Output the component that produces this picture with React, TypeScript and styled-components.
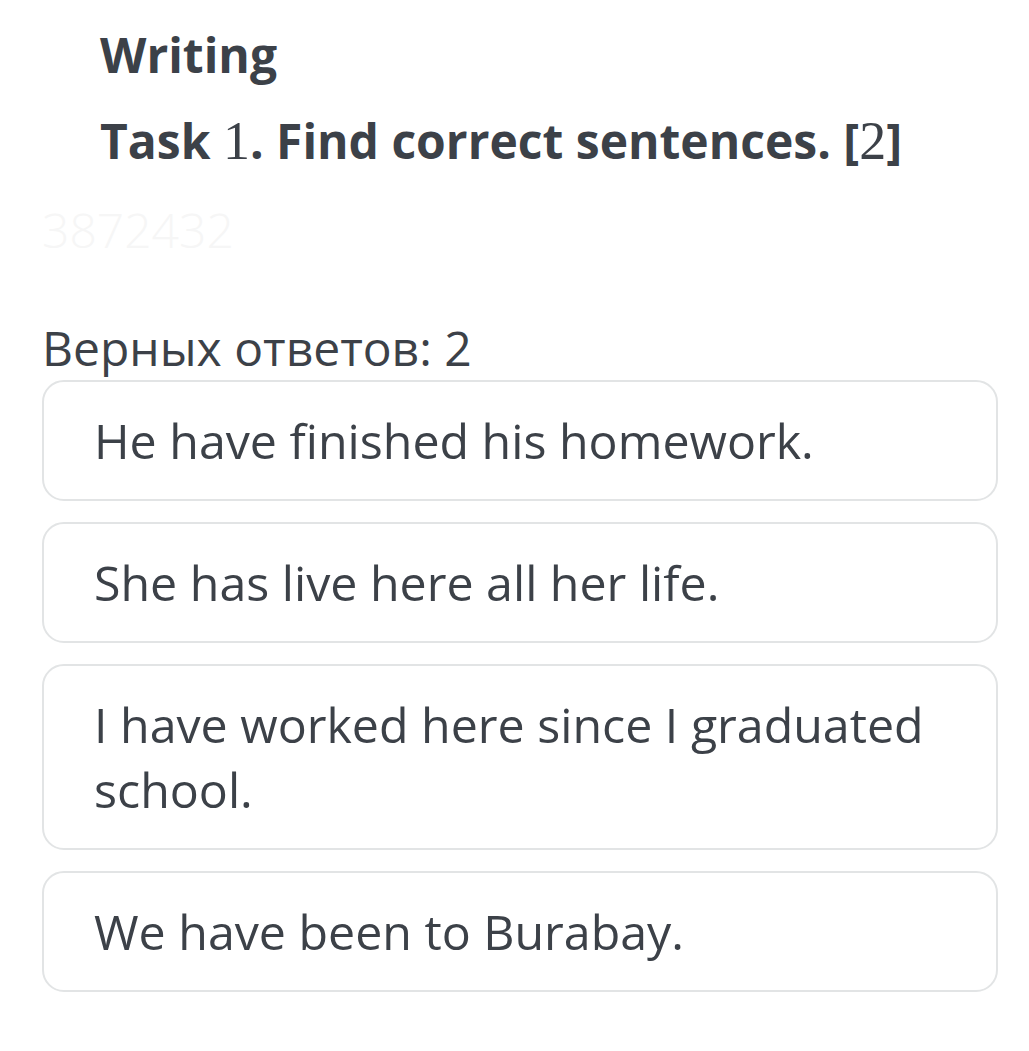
import React from 'react';
import styled, { createGlobalStyle } from 'styled-components';

const GlobalStyle = createGlobalStyle`
  html, body {
    margin: 0;
    padding: 0;
    background: #ffffff;
  }
  body {
    font-family: "Open Sans", "Liberation Sans", sans-serif;
    color: #3c4148;
  }
`;

const Page = styled.div`
  width: 1029px;
  min-height: 1051px;
  box-sizing: border-box;
  padding: 22px 31px 0 42px;
`;

const Heading = styled.div`
  padding-left: 58px;
`;

const SectionTitle = styled.h1`
  margin: 0;
  font-size: 48px;
  font-weight: 700;
  line-height: 66px;
`;

const TaskTitle = styled.h2`
  margin: 20px 0 0;
  font-size: 48px;
  font-weight: 700;
  line-height: 66px;
`;

const SerifDigit = styled.span`
  font-family: "Liberation Serif", serif;
  font-size: 54px;
  font-weight: 400;
`;

const Watermark = styled.div`
  margin-top: 26px;
  font-size: 48px;
  font-weight: 300;
  line-height: 60px;
  color: #f6f6f6;
`;

const Hint = styled.div`
  margin-top: 58px;
  font-size: 48px;
  line-height: 60px;
`;

const Options = styled.div`
  display: flex;
  flex-direction: column;
  gap: 21px;
  margin-top: 2px;
`;

const Option = styled.div`
  border: 2px solid #e2e4e5;
  border-radius: 22px;
  padding: 26px 40px 26px 50px;
  font-size: 48.3px;
  line-height: 65px;
  background: #fff;
`;

const options = [
  'He have finished his homework.',
  'She has live here all her life.',
  'I have worked here since I graduated school.',
  'We have been to Burabay.',
];

export default function App() {
  return (
    <Page>
      <GlobalStyle />
      <Heading>
        <SectionTitle>Writing</SectionTitle>
        <TaskTitle>
          Task <SerifDigit>1</SerifDigit>. Find correct sentences. [<SerifDigit>2</SerifDigit>]
        </TaskTitle>
      </Heading>
      <Watermark>3872432</Watermark>
      <Hint>Верных ответов: 2</Hint>
      <Options>
        {options.map((text) => (
          <Option key={text}>{text}</Option>
        ))}
      </Options>
    </Page>
  );
}
